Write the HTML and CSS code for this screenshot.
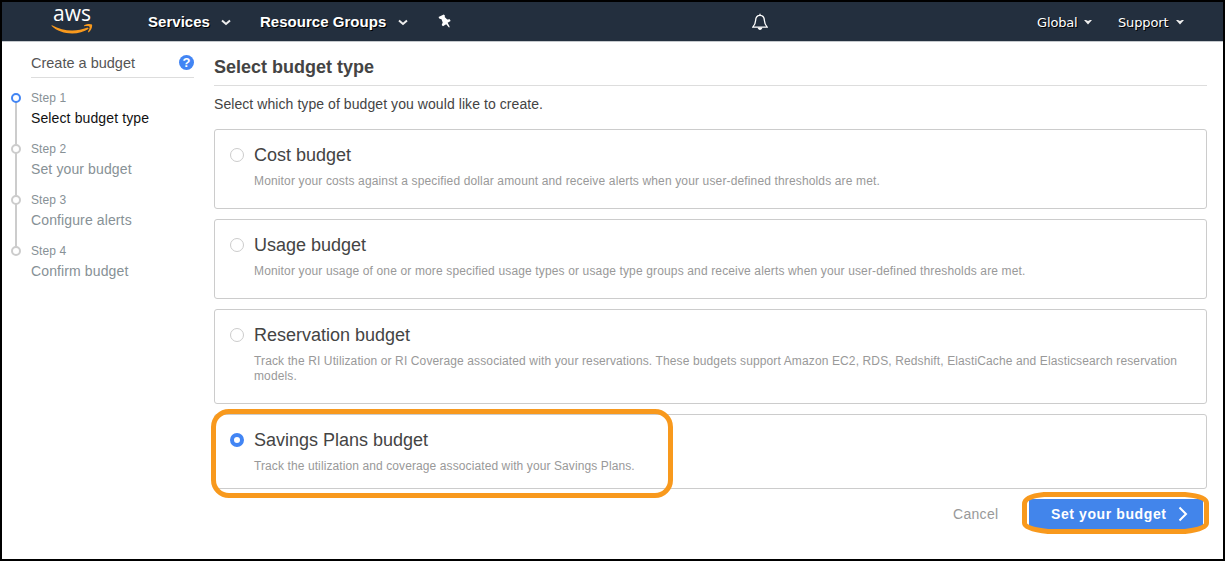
FILE: index.html
```html
<!DOCTYPE html>
<html lang="en">
<head>
<meta charset="utf-8">
<title>Create a budget</title>
<link rel="stylesheet" href="styles.css">
</head>
<body>
<div class="window">
  <header class="topbar">
    <div class="logo">
      <span class="logo-text">aws</span>
      <svg class="smile" width="42" height="11" viewBox="0 0 42 11"><path d="M.3 1.800L1 1.200C12 7.400 25 8 36.500 3.600L37.800 4.800C27 12 10 11 .3 1.800Z" fill="#f8991d"/><path d="M33 1.400C36 -.3 39.500 -.2 41 .6C41.600 3 40.200 6.600 37.600 8.400L37 7.700C38.300 5.500 39 3.400 38.500 2.700C37.600 2 35.300 2 33 2.200Z" fill="#f8991d"/></svg>
    </div>
    <nav class="nav">
      <span class="nav-item services">Services</span>
      <svg class="chev" width="10" height="7" viewBox="0 0 10 7"><path d="M1 1.500L5 5L9 1.500" fill="none" stroke="#eee" stroke-width="2"/></svg>
      <span class="nav-item groups">Resource Groups</span>
      <svg class="chev" width="10" height="7" viewBox="0 0 10 7"><path d="M1 1.500L5 5L9 1.500" fill="none" stroke="#eee" stroke-width="2"/></svg>
      <svg class="pin" width="14" height="15" viewBox="0 0 14 15"><path d="M.5 3L5.800 .5L7 1.700L6.700 3L9.200 5.400L11.800 5.300L12.600 7L9.600 8.800L11.500 12.300L11.500 13.500L10.700 13.300L8.200 10.200L5 12.200L3.700 11L4.700 8.600L3.500 5.200L1.500 4.700Z" fill="#fff"/></svg>
    </nav>
    <svg class="bell" width="16" height="18" viewBox="0 0 16 18"><path d="M8 .8V2.500M8 2.300C4.800 2.300 3.700 4.800 3.600 7.500C3.500 11 2.500 12.200 .8 14.200H15.200C13.500 12.200 12.500 11 12.400 7.500C12.300 4.800 11.200 2.300 8 2.300Z" fill="none" stroke="#fff" stroke-width="1.300"/><path d="M5.700 14.500H10.300C10.300 17.800 5.700 17.800 5.700 14.500Z" fill="#fff"/></svg>
    <div class="tools">
      <span class="tool global">Global</span>
      <svg class="caret" width="8" height="5" viewBox="0 0 8 5"><path d="M0 0H2L4 1L6 0H8L4 4.500Z" fill="#eee"/></svg>
      <span class="tool support">Support</span>
      <svg class="caret" width="8" height="5" viewBox="0 0 8 5"><path d="M0 0H2L4 1L6 0H8L4 4.500Z" fill="#eee"/></svg>
    </div>
  </header>
  <div class="page">
    <aside class="side">
      <div class="side-head"><span class="side-title">Create a budget</span><span class="help">?</span></div>
      <ol class="steps">
        <li class="step current"><span class="num">Step 1</span><span class="name">Select budget type</span></li>
        <li class="step"><span class="num">Step 2</span><span class="name">Set your budget</span></li>
        <li class="step"><span class="num">Step 3</span><span class="name">Configure alerts</span></li>
        <li class="step"><span class="num">Step 4</span><span class="name">Confirm budget</span></li>
      </ol>
    </aside>
    <main class="main">
      <h1 class="title">Select budget type</h1>
      <p class="intro">Select which type of budget you would like to create.</p>
      <div class="cards">
        <section class="card"><span class="radio"></span><div class="body"><h2 class="card-title">Cost budget</h2><p class="desc">Monitor your costs against a specified dollar amount and receive alerts when your user-defined thresholds are met.</p></div></section>
        <section class="card"><span class="radio"></span><div class="body"><h2 class="card-title">Usage budget</h2><p class="desc">Monitor your usage of one or more specified usage types or usage type groups and receive alerts when your user-defined thresholds are met.</p></div></section>
        <section class="card tall"><span class="radio"></span><div class="body"><h2 class="card-title">Reservation budget</h2><p class="desc">Track the RI Utilization or RI Coverage associated with your reservations. These budgets support Amazon EC2, RDS, Redshift, ElastiCache and Elasticsearch reservation<br>models.</p></div></section>
        <section class="card short"><span class="radio on"></span><div class="body"><h2 class="card-title">Savings Plans budget</h2><p class="desc">Track the utilization and coverage associated with your Savings Plans.</p></div><span class="mark mark-card"></span></section>
      </div>
      <div class="actions">
        <span class="cancel">Cancel</span>
        <div class="primary"><span class="primary-text">Set your budget</span>
          <svg width="10" height="16" viewBox="0 0 10 16"><path d="M1.500 1.500L8 8L1.500 14.500" fill="none" stroke="#fff" stroke-width="2"/></svg>
          <svg class="mark mark-button" width="187" height="42" viewBox="0 0 187 42"><path d="M22 2.500H163Q184.500 4.500 184.500 11V31Q184.500 37 163 39.500H26Q2.500 37 2.500 31V12Q2.500 4.500 22 2.500Z" fill="none" stroke="#f8991d" stroke-width="5"/></svg>
        </div>
      </div>
    </main>
  </div>
</div>
</body>
</html>
```
FILE: styles.css
```css
*, *::before, *::after { box-sizing: border-box; }
body { margin: 0; font-family: "Liberation Sans", Arial, sans-serif; background: #fff; }
h1, h2, p, ol { margin: 0; padding: 0; font-weight: normal; }
svg { display: block; flex: none; }
.window { width: 1225px; height: 561px; border: 2px solid #000; overflow: hidden; }
.topbar { height: 40px; background: #232f3e; border-bottom: 1px solid #c5c9cd; display: flex; align-items: center; color: #fff; white-space: nowrap; }
.logo { width: 42px; margin-left: 49px; height: 39px; padding-top: 1px; display: flex; flex-direction: column; align-items: center; }
.logo-text { font: 500 21px/20px "Open Sans", sans-serif; letter-spacing: 0; height: 20px; }
.smile { margin-top: 1px; }
.nav { display: flex; align-items: center; margin-left: 55px; width: 560px; }
.nav-item { font-weight: bold; font-size: 15px; line-height: 18px; margin-top: 1px; letter-spacing: .03px; text-shadow: 1px 1px 0 #000; }
.services { width: 73px; }
.groups { width: 138px; margin-left: 29px; }
.chev { margin-top: 2px; }
.pin { margin-left: 30px; margin-top: -1px; }
.bell { margin-left: 44px; }
.tools { display: flex; align-items: center; margin-left: 269px; }
.tool { font: 13px/16px "DejaVu Sans", sans-serif; margin-top: 3px; letter-spacing: -.15px; text-shadow: 1px 1px 0 #000; }
.global { width: 47px; }
.support { width: 58px; margin-left: 26px; }
.caret { margin-top: 1px; }
.page { display: grid; grid-template-columns: 205px 993px; column-gap: 7px; }
.side { padding: 0 13px 0 8px; }
.side-head { margin-left: 21px; height: 36px; border-bottom: 1px solid #ddd; display: flex; align-items: center; justify-content: space-between; padding-top: 7px; color: #555; }
.side-title { font-size: 14.5px; }
.help { width: 15px; height: 15px; border-radius: 50%; background: #4285f4; color: #fff; font: bold 13px/15px "Liberation Sans", sans-serif; text-align: center; margin-top: -2px; }
.steps { list-style: none; padding-top: 12px; }
.step { height: 51px; padding-left: 21px; position: relative; display: flex; flex-direction: column; color: #879196; }
.step::after { content: ""; position: absolute; left: 1px; top: 3px; width: 10px; height: 10px; border: 2px solid #ccc; border-radius: 50%; background: #fff; }
.step:not(:last-child)::before { content: ""; position: absolute; left: 5px; top: 8px; width: 2px; height: 51px; background: #ccc; }
.step.current::after { border-color: #4285f4; }
.num { font-size: 12px; line-height: 16px; letter-spacing: .1px; }
.name { font-size: 14px; line-height: 20px; letter-spacing: .12px; margin-top: 2px; white-space: nowrap; }
.current .name { color: #111; }
.title { height: 44px; border-bottom: 1px solid #ddd; color: #444; font-size: 18px; font-weight: bold; line-height: 20px; padding-top: 15px; }
.intro { font-size: 14px; line-height: 20px; color: #444; padding-top: 8px; height: 43px; letter-spacing: .07px; }
.cards { display: flex; flex-direction: column; gap: 10px; }
.card { position: relative; height: 80px; border: 1px solid #ccc; border-radius: 3px; display: flex; padding: 14px 0 0 15px; }
.tall { height: 95px; }
.short { height: 75px; }
.radio { width: 14px; height: 14px; border: 1px solid #ccc; border-radius: 50%; margin-top: 4px; flex: none; }
.radio.on { border: 4px solid #4285f4; }
.body { margin-left: 10px; }
.card-title { font-size: 18px; line-height: 22px; color: #444; }
.desc { font-size: 12px; line-height: 15px; color: #999; margin-top: 8px; letter-spacing: .143px; white-space: nowrap; }
.tall .desc { letter-spacing: .125px; }
.short .desc { letter-spacing: .1px; }
.mark { position: absolute; }
.mark-card { left: -4px; top: -6px; width: 462px; height: 89px; border: 5px solid #f8991d; border-radius: 18px; }
.actions { display: flex; justify-content: flex-end; align-items: center; padding: 10px 4px 0 0; }
.cancel { color: #999; font-size: 14px; width: 76px; letter-spacing: .3px; }
.primary { position: relative; width: 174px; height: 30px; background: #4285eb; color: #fff; display: flex; align-items: center; padding-left: 22px; }
.primary-text { font-size: 14px; font-weight: bold; width: 127px; letter-spacing: .6px; white-space: nowrap; }
.mark-button { left: -7px; top: -7px; }
```
